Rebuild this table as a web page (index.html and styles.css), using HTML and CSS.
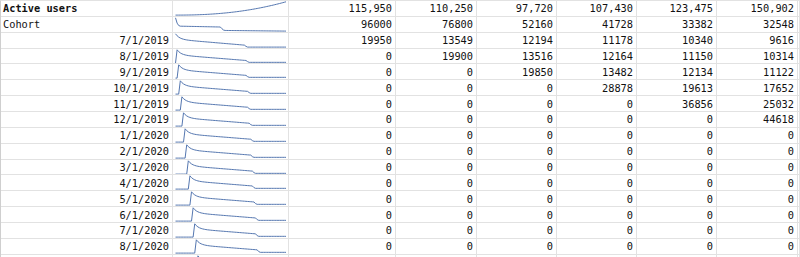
FILE: index.html
```html
<!DOCTYPE html>
<html lang="en">
<head>
    <meta charset="UTF-8">
    <meta name="viewport" content="width=device-width, initial-scale=1.0">
    <title>Cohort retention</title>
    <link rel="stylesheet" href="styles.css">
</head>
<body>
    <div class="sheet">
        <div class="cell label bold">Active users</div>
        <div class="cell spark" data-series="active"></div>
        <div class="cell num">115,950</div><div class="cell num">110,250</div><div class="cell num">97,720</div><div class="cell num">107,430</div><div class="cell num">123,475</div><div class="cell num">150,902</div><div class="cell"></div>

        <div class="cell label">Cohort</div>
        <div class="cell spark" data-series="size"></div>
        <div class="cell num">96000</div><div class="cell num">76800</div><div class="cell num">52160</div><div class="cell num">41728</div><div class="cell num">33382</div><div class="cell num">32548</div><div class="cell"></div>

        <div class="cell label date">7/1/2019</div>
        <div class="cell spark" data-series="0"></div>
        <div class="cell num">19950</div><div class="cell num">13549</div><div class="cell num">12194</div><div class="cell num">11178</div><div class="cell num">10340</div><div class="cell num">9616</div><div class="cell"></div>

        <div class="cell label date">8/1/2019</div>
        <div class="cell spark" data-series="1"></div>
        <div class="cell num">0</div><div class="cell num">19900</div><div class="cell num">13516</div><div class="cell num">12164</div><div class="cell num">11150</div><div class="cell num">10314</div><div class="cell"></div>

        <div class="cell label date">9/1/2019</div>
        <div class="cell spark" data-series="2"></div>
        <div class="cell num">0</div><div class="cell num">0</div><div class="cell num">19850</div><div class="cell num">13482</div><div class="cell num">12134</div><div class="cell num">11122</div><div class="cell"></div>

        <div class="cell label date">10/1/2019</div>
        <div class="cell spark" data-series="3"></div>
        <div class="cell num">0</div><div class="cell num">0</div><div class="cell num">0</div><div class="cell num">28878</div><div class="cell num">19613</div><div class="cell num">17652</div><div class="cell"></div>

        <div class="cell label date">11/1/2019</div>
        <div class="cell spark" data-series="4"></div>
        <div class="cell num">0</div><div class="cell num">0</div><div class="cell num">0</div><div class="cell num">0</div><div class="cell num">36856</div><div class="cell num">25032</div><div class="cell"></div>

        <div class="cell label date">12/1/2019</div>
        <div class="cell spark" data-series="5"></div>
        <div class="cell num">0</div><div class="cell num">0</div><div class="cell num">0</div><div class="cell num">0</div><div class="cell num">0</div><div class="cell num">44618</div><div class="cell"></div>

        <div class="cell label date">1/1/2020</div>
        <div class="cell spark" data-series="6"></div>
        <div class="cell num">0</div><div class="cell num">0</div><div class="cell num">0</div><div class="cell num">0</div><div class="cell num">0</div><div class="cell num">0</div><div class="cell"></div>

        <div class="cell label date">2/1/2020</div>
        <div class="cell spark" data-series="7"></div>
        <div class="cell num">0</div><div class="cell num">0</div><div class="cell num">0</div><div class="cell num">0</div><div class="cell num">0</div><div class="cell num">0</div><div class="cell"></div>

        <div class="cell label date">3/1/2020</div>
        <div class="cell spark" data-series="8"></div>
        <div class="cell num">0</div><div class="cell num">0</div><div class="cell num">0</div><div class="cell num">0</div><div class="cell num">0</div><div class="cell num">0</div><div class="cell"></div>

        <div class="cell label date">4/1/2020</div>
        <div class="cell spark" data-series="9"></div>
        <div class="cell num">0</div><div class="cell num">0</div><div class="cell num">0</div><div class="cell num">0</div><div class="cell num">0</div><div class="cell num">0</div><div class="cell"></div>

        <div class="cell label date">5/1/2020</div>
        <div class="cell spark" data-series="10"></div>
        <div class="cell num">0</div><div class="cell num">0</div><div class="cell num">0</div><div class="cell num">0</div><div class="cell num">0</div><div class="cell num">0</div><div class="cell"></div>

        <div class="cell label date">6/1/2020</div>
        <div class="cell spark" data-series="11"></div>
        <div class="cell num">0</div><div class="cell num">0</div><div class="cell num">0</div><div class="cell num">0</div><div class="cell num">0</div><div class="cell num">0</div><div class="cell"></div>

        <div class="cell label date">7/1/2020</div>
        <div class="cell spark" data-series="12"></div>
        <div class="cell num">0</div><div class="cell num">0</div><div class="cell num">0</div><div class="cell num">0</div><div class="cell num">0</div><div class="cell num">0</div><div class="cell"></div>

        <div class="cell label date">8/1/2020</div>
        <div class="cell spark" data-series="13"></div>
        <div class="cell num">0</div><div class="cell num">0</div><div class="cell num">0</div><div class="cell num">0</div><div class="cell num">0</div><div class="cell num">0</div><div class="cell"></div>

        <!-- next row only peeks in at the bottom edge -->
        <div class="cell"></div>
        <div class="cell spark" data-series="14"></div>
        <div class="cell"></div><div class="cell"></div><div class="cell"></div><div class="cell"></div><div class="cell"></div><div class="cell"></div><div class="cell"></div>
    </div>

    <script>
        // sparkline data: ~70 monthly points per row
        const N = 70;

        function activeSeries() {
            const vals = [];
            for (let i = 0; i < N; i++) {
                vals.push(Math.pow(i / (N - 1), 2.3));
            }
            return vals;
        }

        function sizeSeries() {
            const vals = [1, 0.6, 0.42, 0.37];
            for (let i = 4; i < N; i++) {
                if (i <= 28) vals.push(0.37 - (i - 3) * 0.0025);
                else if (i === 29) vals.push(0.18);
                else if (i === 30) vals.push(0.08);
                else vals.push(0.05 * (N - 1 - i) / (N - 31));
            }
            return vals;
        }

        function cohortSeries(k) {
            const drop = Math.round(44 + 0.6 * k);
            const vals = [];
            for (let i = 0; i < N; i++) {
                const j = i - k;
                if (j < 0) vals.push(0);
                else if (i > drop) vals.push(0.057);
                else if (i === drop) vals.push(0.11);
                else vals.push(0.61 - 0.0096 * j + 0.39 * Math.exp(-j / 2.5));
            }
            return vals;
        }

        document.querySelectorAll('.spark').forEach(cell => {
            const key = cell.dataset.series;
            let vals;
            if (key === 'active') vals = activeSeries();
            else if (key === 'size') vals = sizeSeries();
            else vals = cohortSeries(parseInt(key, 10));

            const w = cell.clientWidth;
            const h = cell.clientHeight;
            const x0 = 2.5, x1 = w - 2;
            const yTop = 0.8, yBot = h - 0.9;
            const min = Math.min(...vals);
            const max = Math.max(...vals);

            const pts = vals.map((v, i) => {
                const x = x0 + (x1 - x0) * i / (vals.length - 1);
                const y = yBot - (yBot - yTop) * (v - min) / (max - min);
                return x.toFixed(2) + ',' + y.toFixed(2);
            }).join(' ');

            cell.innerHTML = '<svg width="' + w + '" height="' + h + '" viewBox="0 0 ' + w + ' ' + h + '">' +
                '<polyline points="' + pts + '" /></svg>';
        });
    </script>
</body>
</html>
```

FILE: styles.css
```css
html, body {
    margin: 0;
    padding: 0;
    overflow: hidden;
    background: #fff;
}
.sheet {
    display: grid;
    grid-template-columns: 172px 116px 107px 81px 80px 80px 80px 81px 1fr;
    grid-auto-rows: 15.87px;
    border-top: 1px solid #e2e2e2;
    border-left: 1px solid #cfcfcf;
    font-family: "DejaVu Sans Mono", "Liberation Mono", monospace;
    font-size: 10.3px;
    color: #111;
}
.cell {
    box-sizing: border-box;
    border-right: 1px solid #e2e2e2;
    border-bottom: 1px solid #e2e2e2;
    display: flex;
    align-items: center;
    white-space: nowrap;
    overflow: hidden;
    min-width: 0;
}
.label {
    padding-left: 2px;
}
.bold {
    font-weight: bold;
}
.date,
.num {
    justify-content: flex-end;
    padding-right: 3px;
}
.spark svg {
    display: block;
}
.spark polyline {
    fill: none;
    stroke: #5577b0;
    stroke-width: 1;
    stroke-linejoin: round;
}
```
